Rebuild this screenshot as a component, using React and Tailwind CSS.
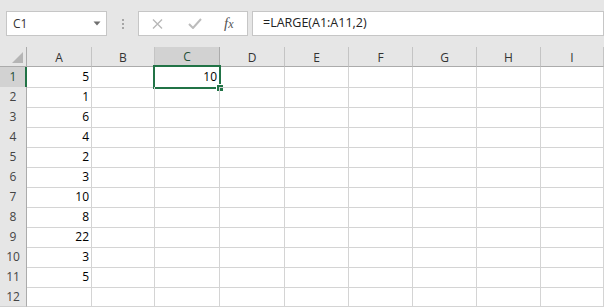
import React from "react";

const COLS = ["A", "B", "C", "D", "E", "F", "G", "H", "I"];
const DATA = [5, 1, 6, 4, 2, 3, 10, 8, 22, 3, 5, null];
const GRID = "grid grid-cols-[27px_65px_63px_65px_65px_64px_64px_64px_64px_63px]";

function Toolbar() {
  return (
    <div className="flex items-start h-[47px] bg-[#e6e6e6] pt-[11px]">
      {/* Name box */}
      <div className="ml-[6px] w-[101px] h-[25px] border border-[#c6c6c6] bg-white flex items-center justify-between pl-[6px] pr-[5px]">
        <span className="text-[12px] text-[#333] leading-none">C1</span>
        <svg width="8" height="5" viewBox="0 0 8 5">
          <path d="M0.5 0.5 H7.5 L4 4.5 Z" fill="#6f6f6f" />
        </svg>
      </div>
      {/* dots */}
      <div className="w-[31px] h-[25px] flex flex-col items-center pt-[8px] gap-[2px]">
        <div className="w-[2px] h-[2px] bg-[#a6a6a6]" />
        <div className="w-[2px] h-[2px] bg-[#a6a6a6]" />
        <div className="w-[2px] h-[2px] bg-[#a6a6a6]" />
      </div>
      {/* formula buttons */}
      <div className="w-[110px] h-[25px] border border-[#c6c6c6] bg-white flex items-center">
        <svg className="ml-[13px]" width="11" height="10" viewBox="0 0 11 10">
          <path d="M1 0.5 L10 9.5 M10 0.5 L1 9.5" stroke="#b8b8b8" strokeWidth="1.4" fill="none" />
        </svg>
        <svg className="ml-[25px]" width="14" height="11" viewBox="0 0 14 11">
          <path d="M1 6 L5 10 L13 1" stroke="#bcbcbc" strokeWidth="2" fill="none" />
        </svg>
        <span className="ml-[22px] font-['Liberation_Serif',serif] italic text-[#555] text-[15px] leading-none">
          f<span className="text-[12px]">x</span>
        </span>
      </div>
      {/* formula input */}
      <div className="ml-[4px] w-[352px] h-[25px] border border-[#c6c6c6] bg-white flex items-center pl-[10px]">
        <span className="text-[12.5px] text-[#222] leading-none">=LARGE(A1:A11,2)</span>
      </div>
    </div>
  );
}

function HeaderRow() {
  return (
    <div className={`${GRID} h-[20px]`}>
      <div className="relative bg-[#e6e6e6] border-r border-b border-[#ababab]">
        <svg className="absolute right-[3px] bottom-[3px]" width="11" height="11" viewBox="0 0 11 11">
          <path d="M11 0 L11 11 L0 11 Z" fill="#b5b5b5" />
        </svg>
      </div>
      {COLS.map((c) =>
        c === "C" ? (
          <div
            key={c}
            className="bg-[#d2d2d2] border-r border-[#ababab] border-b-2 border-b-[#217346] flex items-center justify-center text-[12px] text-[#1f4f35] leading-none pt-[1px]"
          >
            {c}
          </div>
        ) : (
          <div
            key={c}
            className="bg-[#e6e6e6] border-r border-[#c4c4c4] border-b border-b-[#ababab] flex items-center justify-center text-[12px] text-[#333] leading-none pt-[2px]"
          >
            {c}
          </div>
        )
      )}
    </div>
  );
}

function Row({ n, value }) {
  const sel = n === 1;
  return (
    <div className={`${GRID} h-[20px]`}>
      <div
        className={
          sel
            ? "bg-[#d2d2d2] border-b border-b-[#cfcfcf] border-r-2 border-r-[#217346] flex items-center justify-center text-[12px] text-[#1f4f35] leading-none pl-[1px]"
            : "bg-[#e6e6e6] border-b border-b-[#cfcfcf] border-r border-r-[#ababab] flex items-center justify-center text-[12px] text-[#444] leading-none"
        }
      >
        {n}
      </div>
      {COLS.map((c) => {
        let text = null;
        if (c === "A" && value !== null) text = value;
        if (c === "C" && sel) text = 10;
        return (
          <div
            key={c}
            className="relative border-r border-b border-[#d4d4d4] flex items-center justify-end pr-[2px] text-[12px] text-black leading-[20px]"
          >
            {text}
            {c === "C" && sel && (
              <div className="absolute -top-[2px] -left-[2px] -right-[2px] -bottom-[2px] border-2 border-[#217346]">
                <div className="absolute -right-[5px] -bottom-[5px] w-[8px] h-[8px] bg-[#217346] border border-white" />
              </div>
            )}
          </div>
        );
      })}
    </div>
  );
}

export default function App() {
  return (
    <div className="w-[604px] h-[307px] overflow-hidden bg-white font-['Open_Sans','Noto_Sans',sans-serif]">
      <Toolbar />
      <HeaderRow />
      {DATA.map((v, i) => (
        <Row key={i} n={i + 1} value={v} />
      ))}
    </div>
  );
}
